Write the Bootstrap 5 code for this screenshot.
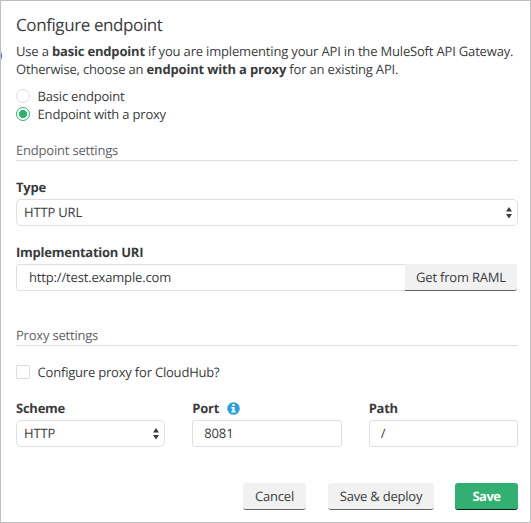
<!DOCTYPE html>
<html lang="en">
<head>
<meta charset="utf-8">
<meta name="viewport" content="width=device-width, initial-scale=1">
<title>Configure endpoint</title>
<link href="https://cdn.jsdelivr.net/npm/bootstrap@5.3.0/dist/css/bootstrap.min.css" rel="stylesheet">
<style>
  body { font: 13px/18px "Open Sans", sans-serif; color: #3a3b3d; background: #fff; text-rendering: geometricPrecision; letter-spacing: -.2px; }
  input, select, button { text-rendering: geometricPrecision !important; letter-spacing: -.16px !important; }
  .dialog-panel { height: 523px; border: 1px solid #bfbfbf; padding: 12px 12px 0 15px; overflow: hidden; }
  .dialog-title { font-size: 17px; line-height: 24px; margin: 0 0 5px; font-weight: 400; color: #3a3b3d; letter-spacing: -.4px; }
  .intro { margin: 0 -8px 9px 0; white-space: nowrap; letter-spacing: -.175px; }
  .intro b, .field-label { font-weight: 700; }
  .edge-mark { position: absolute; left: -2px; top: 46px; font-size: 11px; }
  .form-check { min-height: 18px; margin: 0; padding-left: 21.6px; }
  .form-check .form-check-input { width: 14px; height: 14px; margin: 2px 0 0 -21.6px; border: 1px solid #dcdde0; box-shadow: none; }
  .form-check .form-check-input[type=checkbox] { border-radius: 1px; }
  .form-check .form-check-input:checked { background: #fff radial-gradient(circle, #31b072 0 3.7px, transparent 4.4px); border-color: #31b072; }
  .section-title { font-size: 13px; line-height: 18px; font-weight: 400; color: #5f6165; border-bottom: 1px solid #dedfe1; margin: 18px 0 0; padding-bottom: 1px; }
  .section-title.spaced { margin-top: 35px; }
  .field-block { margin-top: 17px; }
  .field-label { display: flex; align-items: center; margin: 0 0 3px; line-height: 18px; letter-spacing: -.25px; }
  .form-control, .form-select { height: 27px; font-size: 13px; line-height: 18px; color: #3a3b3d; border: 1px solid #dedfe1; border-radius: 3px; padding: 3px 12px 4px; box-shadow: none; }
  .fields .form-control { padding-left: 11px; }
  .form-select { border-radius: 5px; padding: 3px 20px 4px 7px; background: #fff; }
  .select-wrap { position: relative; }
  .select-wrap svg { position: absolute; right: 6px; top: 8px; pointer-events: none; }
  .btn { height: 27px; font-size: 13px; line-height: 18px; padding: 4px 11px; border: 0; border-bottom: 1px solid #5e6064; border-radius: 3px; background: #f1f1f1; color: #3a3b3d; letter-spacing: -.2px !important; }
  .btn-save { background: #31b072; color: #fff; font-weight: 700; border-bottom-color: #061b10; letter-spacing: -.5px !important; }
  .w-cancel, .w-save { width: 63px; padding-inline: 0; }
  .w-deploy { width: 106px; padding-inline: 0; margin: 0 21px 0 22px; }
  .input-group > .w-raml { width: 112px; padding-inline: 0; margin: 0 1px 0 0; }
  .fields { --bs-gutter-x: 27px; margin-top: 18px; }
  .actions { margin-top: 36px; }
</style>
</head>
<body>
<main class="dialog-panel position-relative">
  <span class="edge-mark" aria-hidden="true">)</span>
  <h1 class="dialog-title">Configure endpoint</h1>
  <p class="intro">Use a <b>basic endpoint</b> if you are implementing your API in the MuleSoft API Gateway.<br>Otherwise, choose an <b>endpoint with a proxy</b> for an existing API.</p>

  <div class="form-check">
    <input class="form-check-input" type="radio" name="kind" id="basic">
    <label class="d-block" for="basic">Basic endpoint</label>
  </div>
  <div class="form-check">
    <input class="form-check-input" type="radio" name="kind" id="proxy" checked>
    <label class="d-block" for="proxy">Endpoint with a proxy</label>
  </div>

  <h2 class="section-title">Endpoint settings</h2>

  <div class="field-block">
    <label class="field-label" for="type">Type</label>
    <div class="select-wrap">
      <select class="form-select" id="type"><option>HTTP URL</option></select>
      <svg width="6" height="12" viewBox="0 0 6 12" fill="#3a3b3d"><path d="M3 0 6 4.5H0zM0 7h6L3 11.5z"/></svg>
    </div>
  </div>

  <div class="field-block">
    <label class="field-label" for="uri">Implementation URI</label>
    <div class="input-group flex-nowrap">
      <input class="form-control" id="uri" value="http://test.example.com">
      <button class="btn w-raml flex-shrink-0" type="button">Get from RAML</button>
    </div>
  </div>

  <h2 class="section-title spaced">Proxy settings</h2>

  <div class="form-check field-block">
    <input class="form-check-input" type="checkbox" id="hub">
    <label class="d-block" for="hub">Configure proxy for CloudHub?</label>
  </div>

  <div class="row fields">
    <div class="col-4">
      <label class="field-label" for="scheme">Scheme</label>
      <div class="select-wrap">
        <select class="form-select" id="scheme"><option>HTTP</option></select>
        <svg width="6" height="12" viewBox="0 0 6 12" fill="#3a3b3d"><path d="M3 0 6 4.5H0zM0 7h6L3 11.5z"/></svg>
      </div>
    </div>
    <div class="col-4">
      <label class="field-label" for="port">Port
        <svg class="ms-2" width="13" height="13" viewBox="0 0 13 13"><circle cx="6.5" cy="6.5" r="6.3" fill="#2f9fe0"/><path fill="#fff" d="M5.4 2h2.2v2H5.4zM4.4 5h3.2v4h1v1.4H4.4V9h1V6.4h-1z"/></svg>
      </label>
      <input class="form-control" id="port" value="8081">
    </div>
    <div class="col-4">
      <label class="field-label" for="path">Path</label>
      <input class="form-control" id="path" value="/">
    </div>
  </div>

  <div class="d-flex justify-content-end actions">
    <button class="btn w-cancel" type="button">Cancel</button>
    <button class="btn w-deploy" type="button">Save &amp; deploy</button>
    <button class="btn btn-save w-save" type="button">Save</button>
  </div>
</main>
<script src="https://cdn.jsdelivr.net/npm/bootstrap@5.3.0/dist/js/bootstrap.bundle.min.js"></script>
</body>
</html>
